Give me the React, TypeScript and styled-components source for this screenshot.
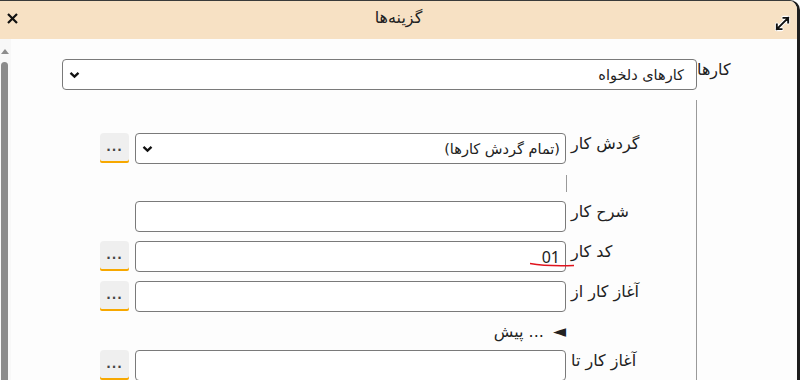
import React from 'react';
import styled, {createGlobalStyle} from 'styled-components';

const Global = createGlobalStyle`
  html, body {
    margin: 0;
    padding: 0;
    background: #ffffff;
  }
  body {
    font-family: 'Noto Sans', 'DejaVu Sans', sans-serif;
    color: #222;
  }
  * {
    box-sizing: border-box;
  }
`;

const Window = styled.div`
  width: 800px;
  height: 380px;
  display: flex;
  flex-direction: column;
  overflow: hidden;
  background: #fdfdfd;
  border-top: 1px solid #3a3a3a;
  border-right: 3px solid #1e1e1e;
  border-top-right-radius: 10px;
`;

const TitleBar = styled.header`
  height: 38px;
  flex: none;
  display: grid;
  grid-template-columns: 32px 1fr 32px;
  align-items: center;
  background: #f7e1c4;
`;

const Title = styled.div`
  direction: rtl;
  text-align: center;
  font-family: 'DejaVu Sans', sans-serif;
  font-size: 16px;
  color: #222;
  padding-bottom: 6px;
`;

const IconSlot = styled.div<{$side: 'left' | 'right'}>`
  display: flex;
  justify-content: ${(p) => (p.$side === 'left' ? 'flex-start' : 'flex-end')};
  padding: ${(p) => (p.$side === 'left' ? '0 0 4px 7px' : '7px 6px 0 0')};
`;

const Body = styled.div`
  flex: 1;
  display: flex;
  min-height: 0;
`;

const Scrollbar = styled.div`
  width: 11px;
  flex: none;
  display: flex;
  flex-direction: column;
  align-items: center;
  background: #f8f8f8;
  padding-top: 10px;
`;

const ScrollArrow = styled.div`
  width: 0;
  height: 0;
  border-left: 4px solid transparent;
  border-right: 4px solid transparent;
  border-bottom: 5px solid #8c8c8c;
  margin-left: -2px;
`;

const ScrollThumb = styled.div`
  width: 7px;
  flex: 1;
  margin-top: 8px;
  margin-left: -2px;
  background: #8b8b8b;
  border-radius: 4px 4px 0 0;
`;

const Content = styled.div`
  flex: 1;
  direction: rtl;
  padding: 20px 0 0 51px;
  display: grid;
  grid-template-columns: 100px 635px;
  grid-template-rows: auto 1fr;
  row-gap: 10px;
`;

const Label = styled.div`
  text-align: left;
  padding: 1px 6px 0 0;
  font-family: 'DejaVu Sans', sans-serif;
  font-size: 16px;
  color: #222;
  white-space: nowrap;
`;

const SelectBox = styled.div<{$pad: number}>`
  height: 31px;
  display: flex;
  align-items: center;
  justify-content: space-between;
  padding: 0 ${(p) => p.$pad}px 0 6px;
  background: #ffffff;
  border: 1px solid #7a7a7a;
  border-radius: 4px;
  font-family: 'DejaVu Sans', sans-serif;
  font-size: 14.5px;
  color: #222;
`;

const Group = styled.section`
  grid-column: 2;
  border-right: 1px solid #9a9a9a;
  padding: 33px 0 0 38px;
  display: flex;
  flex-direction: column;
  gap: 9px;
`;

const Row = styled.div`
  display: grid;
  grid-template-columns: 130px 466px;
`;

const SubLabel = styled(Label)`
  padding: 1px 0 0 5px;
`;

const Field = styled.div`
  position: relative;
  display: grid;
  grid-template-columns: 1fr 29px;
  column-gap: 6px;
`;

const Input = styled.div`
  height: 31px;
  display: flex;
  align-items: center;
  padding: 0 5px;
  background: #ffffff;
  border: 1px solid #7a7a7a;
  border-radius: 4px;
  font-family: 'Noto Sans', 'DejaVu Sans', sans-serif;
  font-size: 16px;
  color: #222;
`;

const MoreButton = styled.div`
  grid-column: 2;
  height: 30px;
  display: flex;
  align-items: center;
  justify-content: center;
  background: #efefef;
  border-radius: 4px 4px 2px 2px;
  box-shadow: inset 0 -2px 0 #f7a800;
  font-family: 'DejaVu Sans', sans-serif;
  font-size: 12px;
  font-weight: bold;
  letter-spacing: 1px;
  color: #444;
  padding-bottom: 3px;
`;

const Separator = styled.div`
  height: 17px;
  margin-right: 129px;
  width: 1px;
  margin-top: 2px;
  background: #9a9a9a;
`;

const MoreLine = styled.div`
  height: 20px;
  display: grid;
  grid-template-columns: 130px 466px;
  font-family: 'DejaVu Sans', sans-serif;
  font-size: 16px;
  color: #222;
  line-height: 20px;

  span {
    grid-column: 2;
  }

  .tri {
    font-size: 17px;
    margin-left: 4px;
  }
`;

const SpellMark = styled.svg`
  position: absolute;
  top: 21px;
  left: 429px;
  width: 46px;
  height: 6px;
  overflow: visible;
`;

function Chevron(): JSX.Element {
  return (
    <svg width="11" height="8" viewBox="0 0 11 8">
      <path d="M1.5 1.8 L5.5 5.6 L9.5 1.8" fill="none" stroke="#111" strokeWidth="2.3" />
    </svg>
  );
}

function CloseIcon(): JSX.Element {
  return (
    <svg width="11" height="11" viewBox="0 0 11 11">
      <path d="M1 1 L10 10 M10 1 L1 10" stroke="#111" strokeWidth="2.2" />
    </svg>
  );
}

function ExpandIcon(): JSX.Element {
  const d = 'M3 15 L15 3 M3 15 L3 10 M3 15 L8 15 M15 3 L10 3 M15 3 L15 8';
  return (
    <svg width="17" height="17" viewBox="0 0 18 18">
      <path d={d} fill="none" stroke="#fff" strokeWidth="4.2" strokeLinecap="round" />
      <path d={d} fill="none" stroke="#111" strokeWidth="2" strokeLinecap="square" />
    </svg>
  );
}

type FieldRowProps = {
  label: string;
  value?: string;
  more?: boolean;
  select?: boolean;
  mark?: boolean;
};

function FieldRow(props: FieldRowProps): JSX.Element {
  return (
    <Row>
      <SubLabel>{props.label}</SubLabel>
      <Field>
        {props.select ? (
          <SelectBox $pad={5}>
            <span>{props.value}</span>
            <Chevron />
          </SelectBox>
        ) : (
          <Input>{props.value}</Input>
        )}
        {props.more && <MoreButton>...</MoreButton>}
        {props.mark && (
          <SpellMark viewBox="0 0 46 6">
            <path d="M1 1.5 Q18 4.5 45 3.5" fill="none" stroke="#e0141e" strokeWidth="1.6" />
          </SpellMark>
        )}
      </Field>
    </Row>
  );
}

export default function App(): JSX.Element {
  return (
    <>
      <Global />
      <Window>
        <TitleBar>
          <IconSlot $side="left">
            <CloseIcon />
          </IconSlot>
          <Title>گزینه‌ها</Title>
          <IconSlot $side="right">
            <ExpandIcon />
          </IconSlot>
        </TitleBar>
        <Body>
          <Scrollbar>
            <ScrollArrow />
            <ScrollThumb />
          </Scrollbar>
          <Content>
            <Label>کارها</Label>
            <SelectBox $pad={12}>
              <span>کارهای دلخواه</span>
              <Chevron />
            </SelectBox>
            <Group>
              <FieldRow label="گردش کار" value="(تمام گردش کارها)" select more />
              <Separator />
              <FieldRow label="شرح کار" />
              <FieldRow label="کد کار" value="01" more mark />
              <FieldRow label="آغاز کار از" more />
              <MoreLine>
                <span>
                  <span className="tri">◄</span> ... پیش
                </span>
              </MoreLine>
              <FieldRow label="آغاز کار تا" more />
            </Group>
          </Content>
        </Body>
      </Window>
    </>
  );
}
